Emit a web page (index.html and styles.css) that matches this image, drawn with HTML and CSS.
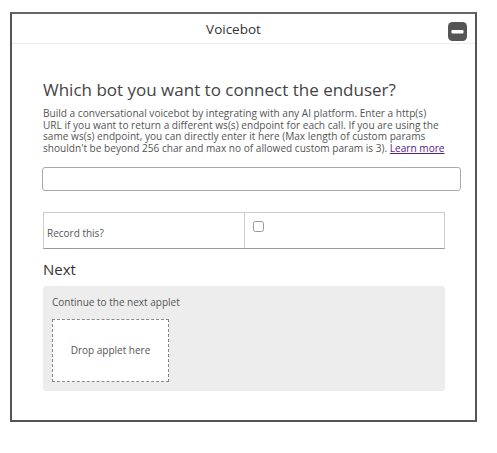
FILE: index.html
```html
<!DOCTYPE html>
<html>
<head>
<meta charset="utf-8">
<link rel="stylesheet" href="styles.css">
</head>
<body>
<div class="panel">
  <div class="header">
    <div class="title">Voicebot</div>
    <div class="minimize" aria-label="Minimize">
      <svg width="19" height="19" viewBox="0 0 19 19"><rect x="0" y="0" width="19" height="19" rx="4.5" fill="#555"/><rect x="3.5" y="8" width="12" height="3.5" rx="0.8" fill="#fff"/></svg>
    </div>
  </div>
  <div class="content">
    <h2 class="question">Which bot you want to connect the enduser?</h2>
    <p class="desc">Build a conversational voicebot by integrating with any AI platform. Enter a http(s)<br>URL if you want to return a different ws(s) endpoint for each call. If you are using the<br>same ws(s) endpoint, you can directly enter it here (Max length of custom params<br>shouldn't be beyond 256 char and max no of allowed custom param is 3). <a href="#" class="learn">Learn more</a></p>
    <input class="url-input" type="text">
    <div class="record-row">
      <div class="record-label">Record this?</div>
      <div class="record-check"><span class="checkbox"></span></div>
    </div>
    <h3 class="next-title">Next</h3>
    <div class="next-box">
      <div class="next-caption">Continue to the next applet</div>
      <div class="drop-zone">Drop applet here</div>
    </div>
  </div>
</div>
</body>
</html>
```
FILE: styles.css
```css
* { box-sizing: border-box; }
html, body { margin: 0; padding: 0; background: #fff; }
body { font-family: "Open Sans", "DejaVu Sans", sans-serif; color: #444; }

.panel {
  margin: 12px 0 0 10px;
  width: 467px;
  height: 410px;
  border: 2px solid #555;
  border-top-color: #666;
  background: #fff;
}

.header {
  height: 30px;
  border-bottom: 1px solid #eee;
  display: flex;
  align-items: center;
  padding: 0 8px 0 7px;
}
.title {
  flex: 1;
  text-align: center;
  font-size: 13.5px;
  color: #333;
}
.minimize { width: 19px; height: 19px; display: flex; margin-top: 5px; }

.content { padding: 0 30px 0 31px; }

.question {
  margin: 34px 0 0;
  font-size: 17px;
  font-weight: 400;
  line-height: 23px;
  color: #444;
}
.desc {
  margin: 7px 0 0;
  font-size: 10.1px;
  line-height: 11.7px;
  color: #555;
  white-space: nowrap;
}
.learn { color: #551a8b; text-decoration: underline; }

.url-input {
  display: block;
  margin: 12px 0 0 -1px;
  width: 419px;
  height: 24px;
  border: 1px solid #aaa;
  border-radius: 3px;
  background: #fff;
  font-family: inherit;
}

.record-row {
  margin-top: 21px;
  display: grid;
  grid-template-columns: 201px 1fr;
  height: 37px;
  border: 1px solid #ccc;
  border-bottom-color: #999;
}
.record-label {
  border-right: 1px solid #ccc;
  font-size: 10px;
  color: #555;
  display: flex;
  align-items: center;
  padding: 5px 0 0 3px;
}
.record-check { padding: 8px 0 0 8px; }
.checkbox {
  display: block;
  width: 11px;
  height: 11px;
  border: 1px solid #999;
  border-radius: 2.5px;
  background: #fff;
}

.next-title {
  margin: 10px 0 0;
  font-size: 15px;
  font-weight: 400;
  line-height: 20px;
  color: #333;
}
.next-box {
  margin-top: 7px;
  height: 105px;
  background: #ededed;
  border-radius: 3px;
  padding: 9px 9px;
}
.next-caption {
  font-size: 10px;
  color: #555;
  line-height: 14px;
}
.drop-zone {
  margin-top: 10px;
  width: 117px;
  height: 63px;
  background: #fff;
  border: 1px dashed #888;
  display: flex;
  align-items: center;
  justify-content: center;
  font-size: 10px;
  color: #555;
}
```
